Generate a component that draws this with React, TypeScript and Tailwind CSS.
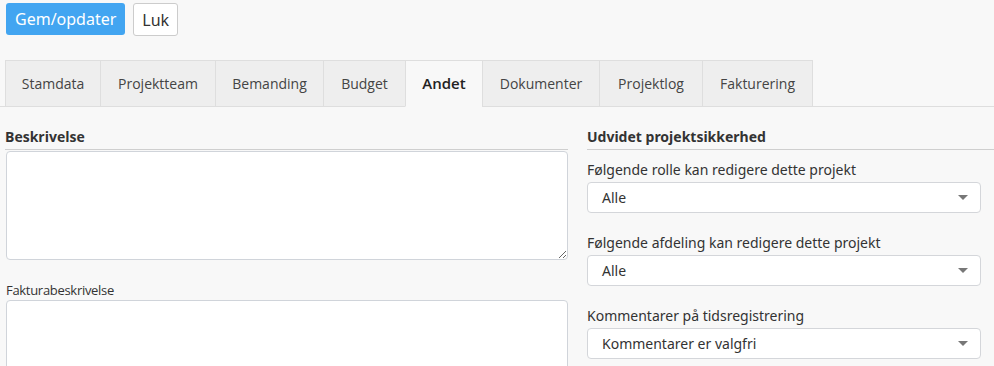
import React from 'react';

const TABS = [
  { label: 'Stamdata', w: 'w-[96px]' },
  { label: 'Projektteam', w: 'w-[116px]' },
  { label: 'Bemanding', w: 'w-[109px]' },
  { label: 'Budget', w: 'w-[83px]' },
  { label: 'Andet', w: 'w-[78px]' },
  { label: 'Dokumenter', w: 'w-[118px]' },
  { label: 'Projektlog', w: 'w-[104px]' },
  { label: 'Fakturering', w: 'w-[111px]' },
];
const ACTIVE = 'Andet';

const Caret: React.FC = () => (
  <svg width="10" height="5" viewBox="0 0 10 5" className="shrink-0">
    <path d="M0 0h10L5 5z" fill="#777" />
  </svg>
);

const SelectBox: React.FC<{ label: string; value: string }> = ({ label, value }) => (
  <div className="flex flex-col">
    <label className="text-[14px] leading-[20px] text-[#333] mb-[2px]">{label}</label>
    <div className="h-[31px] bg-white border border-[#d4d6da] rounded-[4px] flex items-center justify-between pl-[14px] pr-[12px] pb-px text-[14px] text-[#333]">
      <span>{value}</span>
      <Caret />
    </div>
  </div>
);

export default function App() {
  return (
    <div className="w-[994px] h-[366px] overflow-hidden bg-[#f8f8f8] text-[#333]" style={{ fontFamily: '"Noto Sans", "Open Sans", sans-serif' }}>
      <div className="flex gap-[8px] pl-[6px] pt-[3px]">
        <button className="h-[32px] px-[9px] rounded-[3px] bg-[#42a5f1] text-white text-[16px]">Gem/opdater</button>
        <button className="h-[33px] px-[8px] rounded-[3px] bg-white border border-[#ccc] text-[#333] text-[16px]">Luk</button>
      </div>

      <div className="mt-[24px] flex pl-[5px] border-b border-[#dedede]" style={{ fontFamily: '"Open Sans", sans-serif' }}>
        {TABS.map((t) => (
          <div
            key={t.label}
            className={`${t.w} h-[47px] -mb-px flex items-center justify-center pb-px border border-[#dedede] -ml-px first:ml-0 ${
              t.label === ACTIVE
                ? 'bg-[#f8f8f8] border-b-[#f8f8f8] font-semibold text-[#222] text-[15px]'
                : 'bg-[#eeeeee] text-[#444] text-[14px]'
            }`}
          >
            {t.label}
          </div>
        ))}
      </div>

      <div className="flex gap-[19px] pl-[6px] pt-[20px]">
        <div className="w-[562px] flex flex-col" style={{ fontFamily: '"Open Sans", sans-serif' }}>
          <div className="text-[14px] font-bold text-[#333] leading-[20px] pb-[2px] border-b border-[#cfcfcf] -ml-px">Beskrivelse</div>
          <textarea className="mt-px h-[109px] bg-white border border-[#d0d4da] rounded-[4px] resize-y" />
          <label className="mt-[20px] text-[13px] tracking-[-0.3px] leading-[20px] text-[#333]">Fakturabeskrivelse</label>
          <textarea className="h-[100px] bg-white border border-[#d0d4da] rounded-[4px] resize-y" />
        </div>
        <div className="flex-1 flex flex-col">
          <div className="text-[14px] font-bold leading-[20px] text-[#333] pb-[2px] border-b border-[#cfcfcf]">Udvidet projektsikkerhed</div>
          <div className="flex flex-col gap-[20px] pr-[13px] mt-[10px]">
            <SelectBox label="Følgende rolle kan redigere dette projekt" value="Alle" />
            <SelectBox label="Følgende afdeling kan redigere dette projekt" value="Alle" />
            <SelectBox label="Kommentarer på tidsregistrering" value="Kommentarer er valgfri" />
          </div>
        </div>
      </div>
    </div>
  );
}
